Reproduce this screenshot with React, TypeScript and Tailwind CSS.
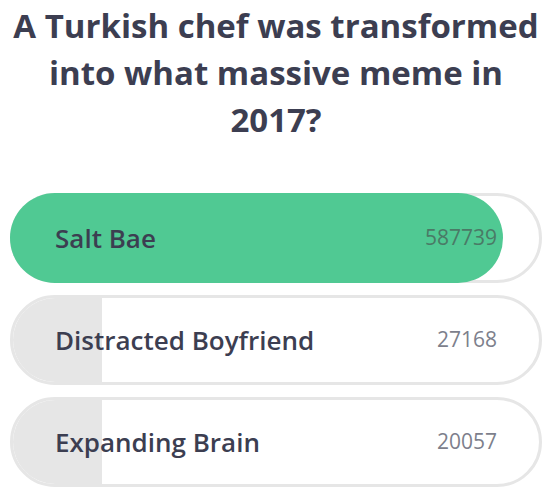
const options = [
  { label: "Salt Bae", votes: 587739, winner: true },
  { label: "Distracted Boyfriend", votes: 27168, winner: false },
  { label: "Expanding Brain", votes: 20057, winner: false },
];

export default function App() {
  const total = options.reduce((s, o) => s + o.votes, 0);

  return (
    <div className="w-[552px] h-[495px] bg-white overflow-hidden font-['Open_Sans',sans-serif] text-[#3c3e51]">
      <h1 className="mx-auto w-[544px] pt-[2px] text-center text-[33px] leading-[47px] font-bold">
        A Turkish chef was transformed into what massive meme in 2017?
      </h1>
      <div className="mt-[50px] pl-[10px] pr-[10px] flex flex-col gap-[12px]">
        {options.map((o) => {
          const pct = (o.votes / total) * 100;
          return (
            <div
              key={o.label}
              className="relative h-[90px] rounded-full border-[3px] border-[#e6e6e6] bg-white"
            >
              {o.winner ? (
                <div
                  className="absolute -left-[3px] -top-[3px] -bottom-[3px] rounded-full bg-[#50c993]"
                  style={{ width: `calc(${pct}% + 6px)` }}
                />
              ) : (
                <div className="absolute left-0 top-0 bottom-0 w-[89px] rounded-l-full bg-[#e6e6e6]" />
              )}
              <div className="relative h-full flex items-center justify-between pl-[42px] pr-[42px]">
                <span className="text-[26px] font-semibold">{o.label}</span>
                <span
                  className={
                    o.winner
                      ? "text-[21px] text-[#4a7a66]"
                      : "text-[21px] text-[#7d7f8c]"
                  }
                >
                  {o.votes}
                </span>
              </div>
            </div>
          );
        })}
      </div>
    </div>
  );
}
